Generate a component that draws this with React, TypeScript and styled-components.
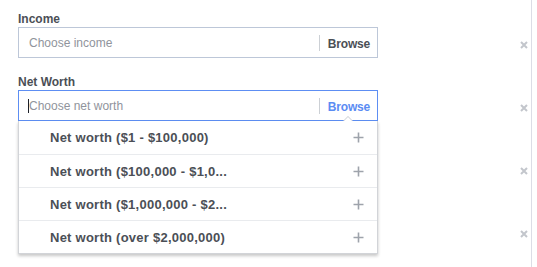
import React from 'react';
import styled, { createGlobalStyle } from 'styled-components';

const GlobalStyle = createGlobalStyle`
  body {
    margin: 0;
    background: #fff;
    font-family: "Liberation Sans", Arial, sans-serif;
    font-size: 12px;
    color: #4b4f56;
  }
`;

interface Field {
  id: string;
  label?: string;
  placeholder?: string;
  focused?: boolean;
}

// the last two fields sit under the open menu, only their remove buttons show
const fields: Field[] = [
  { id: 'income', label: 'Income', placeholder: 'Choose income' },
  { id: 'networth', label: 'Net Worth', placeholder: 'Choose net worth', focused: true },
  { id: 'home-value' },
  { id: 'home-type' },
];

const options = [
  'Net worth ($1 - $100,000)',
  'Net worth ($100,000 - $1,0...',
  'Net worth ($1,000,000 - $2...',
  'Net worth (over $2,000,000)',
];

const PlusIcon = () => (
  <svg width="11" height="11" viewBox="0 0 11 11">
    <path d="M5.5 0.5v10M0.5 5.5h10" stroke="#9ea3ab" strokeWidth="1.6" />
  </svg>
);

const CloseIcon = () => (
  <svg width="8" height="8" viewBox="0 0 8 8">
    <path d="M1 1l6 6M7 1l-6 6" stroke="#c3c6cc" strokeWidth="2" />
  </svg>
);

const App = () => {
  return (
    <>
      <GlobalStyle />
      <Panel>
        {fields.map((f) => (
          <Row key={f.id}>
            <Label>{f.label}</Label>
            <Line>
              <FieldBox>
                <Input $focused={f.focused}>
                  {f.focused && <Caret />}
                  <Placeholder>{f.placeholder}</Placeholder>
                  {f.label && (
                    <>
                      <Divider />
                      <Browse $focused={f.focused}>Browse</Browse>
                    </>
                  )}
                </Input>
                {f.focused && (
                  <Menu>
                    {options.map((o) => (
                      <Option key={o}>
                        <span>{o}</span>
                        <PlusIcon />
                      </Option>
                    ))}
                  </Menu>
                )}
              </FieldBox>
              <Remove>
                <CloseIcon />
              </Remove>
            </Line>
          </Row>
        ))}
      </Panel>
    </>
  );
};

const Panel = styled.main`
  width: 513px;
  min-height: 255px;
  padding: 12px 0 0 18px;
  border-right: 1px solid #dcdde6;
`;

const Row = styled.section`
  margin-bottom: 17px;
`;

const Label = styled.div`
  height: 15px;
  font-weight: bold;
  line-height: 15px;
  color: #4b4f56;
`;

const Line = styled.div`
  display: flex;
  justify-content: space-between;
  align-items: center;
`;

const FieldBox = styled.div`
  position: relative;
  width: 360px;
`;

const Input = styled.div<{ $focused?: boolean }>`
  box-sizing: border-box;
  height: 31px;
  display: flex;
  align-items: center;
  padding: 0 7px 0 9px;
  border: 1px solid ${(p) => (p.$focused ? '#5d8ef3' : '#bdc7d8')};
  background: #fff;
`;

const Caret = styled.span`
  width: 1px;
  height: 14px;
  background: #1d2129;
  margin-right: -1px;
`;

const Placeholder = styled.span`
  flex: 1;
  padding-left: 1px;
  color: #90949c;
`;

const Divider = styled.span`
  width: 1px;
  height: 16px;
  background: #ccd0d5;
  margin-right: 8px;
`;

const Browse = styled.span<{ $focused?: boolean }>`
  font-weight: bold;
  padding-top: 2px;
  letter-spacing: -0.2px;
  color: ${(p) => (p.$focused ? '#5b8cf3' : '#4b4f56')};
`;

const Menu = styled.ul`
  position: absolute;
  top: 100%;
  left: 0;
  z-index: 2;
  box-sizing: border-box;
  width: 360px;
  margin: 0;
  padding: 0;
  list-style: none;
  background: #fff;
  border: 1px solid #d2d4d8;
  border-top: none;
  box-shadow: 0 2px 3px rgba(0, 0, 0, 0.22);

  &::before,
  &::after {
    content: '';
    position: absolute;
    left: 324px;
    border: 5px solid transparent;
    border-top: none;
  }
  &::before {
    top: -5px;
    border-bottom: 5px solid #c9ccd2;
  }
  &::after {
    top: -4px;
    border-bottom: 5px solid #fff;
  }
`;

const Option = styled.li`
  display: flex;
  align-items: center;
  justify-content: space-between;
  height: 33px;
  padding: 0 13px 0 31px;
  font-size: 13px;
  font-weight: bold;
  letter-spacing: 0.25px;
  color: #4b4f56;

  & + & {
    border-top: 1px solid #e9ebee;
    height: 32px;
  }
`;

const Remove = styled.span`
  display: flex;
  margin-top: 4px;
  margin-right: 3px;
`;

export default App;
